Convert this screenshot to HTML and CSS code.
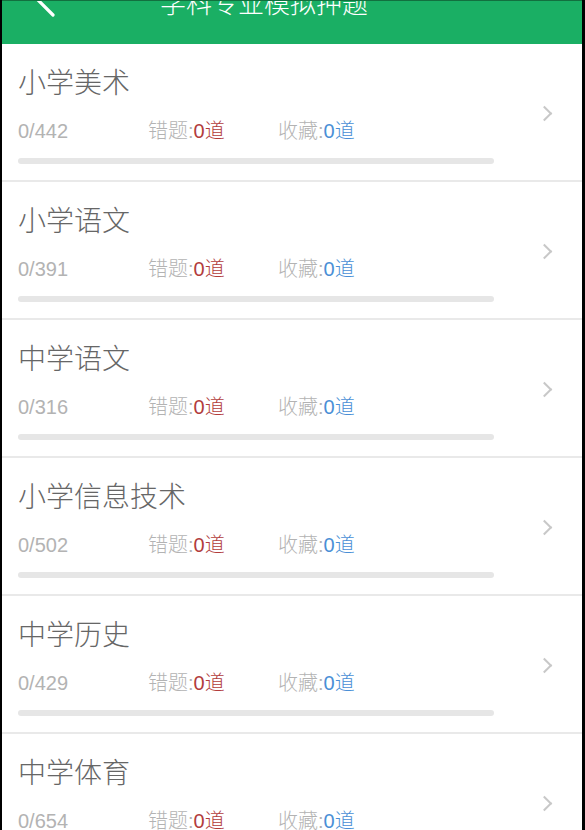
FILE: index.html
```html
<!DOCTYPE html>
<html lang="zh-CN">
<head>
  <meta charset="UTF-8">
  <meta name="viewport" content="width=device-width, initial-scale=1.0">
  <title>学科专业模拟押题</title>
  <link rel="stylesheet" href="styles.css">
</head>
<body>
  <div class="screen">
    <header class="navbar">
      <svg class="nav-back" viewBox="0 0 30 40" aria-hidden="true">
        <polyline points="23,3 7,19 23,35" fill="none" stroke="#fff" stroke-width="3.2" stroke-linecap="round" stroke-linejoin="round"/>
      </svg>
      <h1 class="nav-title">学科专业模拟押题</h1>
    </header>

    <ul class="subject-list">
      <li class="subject">
        <div class="subject-main">
          <h2 class="subject-name">小学美术</h2>
          <div class="subject-stats">
            <span class="stat">0/442</span>
            <span class="stat">错题:<em class="wrong">0道</em></span>
            <span class="stat">收藏:<em class="fav">0道</em></span>
          </div>
          <div class="progress"></div>
        </div>
        <span class="chevron"></span>
      </li>
      <li class="subject">
        <div class="subject-main">
          <h2 class="subject-name">小学语文</h2>
          <div class="subject-stats">
            <span class="stat">0/391</span>
            <span class="stat">错题:<em class="wrong">0道</em></span>
            <span class="stat">收藏:<em class="fav">0道</em></span>
          </div>
          <div class="progress"></div>
        </div>
        <span class="chevron"></span>
      </li>
      <li class="subject">
        <div class="subject-main">
          <h2 class="subject-name">中学语文</h2>
          <div class="subject-stats">
            <span class="stat">0/316</span>
            <span class="stat">错题:<em class="wrong">0道</em></span>
            <span class="stat">收藏:<em class="fav">0道</em></span>
          </div>
          <div class="progress"></div>
        </div>
        <span class="chevron"></span>
      </li>
      <li class="subject">
        <div class="subject-main">
          <h2 class="subject-name">小学信息技术</h2>
          <div class="subject-stats">
            <span class="stat">0/502</span>
            <span class="stat">错题:<em class="wrong">0道</em></span>
            <span class="stat">收藏:<em class="fav">0道</em></span>
          </div>
          <div class="progress"></div>
        </div>
        <span class="chevron"></span>
      </li>
      <li class="subject">
        <div class="subject-main">
          <h2 class="subject-name">中学历史</h2>
          <div class="subject-stats">
            <span class="stat">0/429</span>
            <span class="stat">错题:<em class="wrong">0道</em></span>
            <span class="stat">收藏:<em class="fav">0道</em></span>
          </div>
          <div class="progress"></div>
        </div>
        <span class="chevron"></span>
      </li>
      <li class="subject">
        <div class="subject-main">
          <h2 class="subject-name">中学体育</h2>
          <div class="subject-stats">
            <span class="stat">0/654</span>
            <span class="stat">错题:<em class="wrong">0道</em></span>
            <span class="stat">收藏:<em class="fav">0道</em></span>
          </div>
          <div class="progress"></div>
        </div>
        <span class="chevron"></span>
      </li>
    </ul>
  </div>
</body>
</html>
```

FILE: styles.css
```css
* {
  box-sizing: border-box;
  margin: 0;
  padding: 0;
}

html, body {
  height: 100%;
  overflow: hidden;
}

body {
  font-family: "Noto Sans CJK SC", "Liberation Sans", sans-serif;
  background-color: #000;
  padding: 0 3px 0 2px;
}

.screen {
  background: #fff;
  min-height: 100%;
}

.navbar {
  height: 44px;
  background-color: #1aaf64;
  border-top: 1px solid #12703f;
  display: flex;
  align-items: flex-start;
  overflow: hidden;
}

.nav-back {
  width: 30px;
  height: 40px;
  margin: -21px 0 0 28px;
  flex-shrink: 0;
}

.nav-title {
  margin: -12px 0 0 100px;
  font-size: 26px;
  line-height: 26px;
  font-weight: 300;
  color: #fff;
  white-space: nowrap;
}

.subject-list {
  list-style: none;
}

.subject {
  display: flex;
  align-items: center;
  padding: 19px 0 16px 16px;
  border-bottom: 2px solid #e9e9e9;
}

.subject-main {
  width: 476px;
}

.subject-name {
  font-size: 28px;
  line-height: 36px;
  font-weight: 300;
  color: #666;
  margin-bottom: 20px;
}

.subject-stats {
  display: flex;
  font-family: "Liberation Sans", "Noto Sans CJK SC", sans-serif;
  font-size: 20px;
  line-height: 24px;
  font-weight: 300;
  color: #b3b3b3;
  margin-bottom: 15px;
}

.stat {
  flex: 0 0 130px;
}

.stat em {
  font-style: normal;
}

.wrong {
  color: #b23c3c;
}

.fav {
  color: #4a8fd6;
}

.progress {
  height: 6px;
  border-radius: 3px;
  background-color: #e6e6e6;
}

.chevron {
  width: 11px;
  height: 11px;
  margin: 0 32px 0 auto;
  border-top: 2px solid #c8c8c8;
  border-right: 2px solid #c8c8c8;
  transform: rotate(45deg);
}
```
